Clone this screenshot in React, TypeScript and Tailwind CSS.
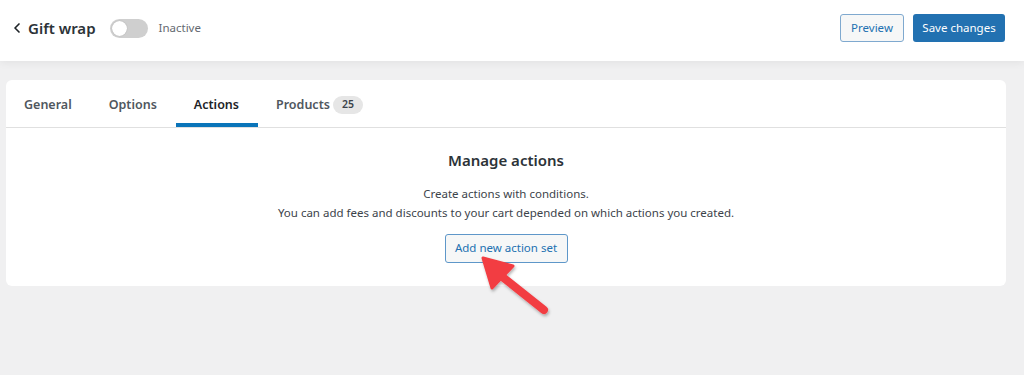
import { ChevronLeft } from "lucide-react";

export default function App() {
  return (
    <div
      className="relative min-h-[375px] w-full overflow-hidden bg-[#f0f0f1] text-[#1d2327]"
      style={{ fontFamily: '"Noto Sans", "Open Sans", sans-serif' }}
    >
      <header className="flex h-[61px] items-start justify-between bg-white pl-[9px] pr-[19px] pt-[14px] shadow-[0_2px_8px_rgba(0,0,0,0.06)]">
        <div className="flex h-[28px] items-center">
          <ChevronLeft className="h-4 w-4 text-[#1d2327]" strokeWidth={2.5} />
          <span className="ml-[3px] text-[15px] font-semibold text-[#2c3338]">Gift wrap</span>
          <span className="ml-[14px] flex h-[19px] w-[38px] items-center rounded-full bg-[#cfcfcf] px-[2px]">
            <span className="h-[15px] w-[15px] rounded-full bg-white shadow-[0_0_1px_rgba(0,0,0,0.3)]" />
          </span>
          <span className="ml-[11px] text-[11.5px] text-[#646970]">Inactive</span>
        </div>
        <div className="flex items-center gap-[9px]">
          <button className="h-[28px] w-[64px] rounded-[3px] border border-[#7fa9cf] bg-[#f6f7f7] text-[11.5px] text-[#2271b1]">
            Preview
          </button>
          <button className="h-[28px] w-[92px] rounded-[3px] bg-[#2271b1] text-[11.5px] text-white">
            Save changes
          </button>
        </div>
      </header>

      <main className="px-[6px] pt-[19px] pr-[18px]">
        <section className="rounded-[6px] bg-white">
          <nav className="flex h-[48px] items-stretch border-b border-[#e0e0e0]">
            {[
              { label: "General", active: false },
              { label: "Options", active: false },
              { label: "Actions", active: true },
            ].map((t) => (
              <div
                key={t.label}
                className={
                  t.active
                    ? "flex items-center border-b-[4px] border-[#0a74b9] pl-[18px] pr-[19px] pt-[7px] text-[12.5px] font-semibold text-[#1d2327]"
                    : "flex items-center border-b-[4px] border-transparent pl-[18px] pr-[19px] pt-[7px] text-[12.5px] font-semibold text-[#50575e]"
                }
              >
                {t.label}
              </div>
            ))}
            <div className="flex items-center border-b-[4px] border-transparent pl-[18px] pr-[19px] pt-[7px] text-[12.5px] font-semibold text-[#50575e]">
              Products
              <span className="ml-[3px] rounded-full bg-[#e6e6e6] px-[9px] py-[1px] text-[10.5px] font-semibold text-[#3c434a]">
                25
              </span>
            </div>
          </nav>
          <div className="flex flex-col items-center pb-[23px] pt-[21px]">
            <h2 className="text-[15px] font-semibold text-[#2c3338]">Manage actions</h2>
            <p className="mt-[12px] text-center text-[11.5px] leading-[19px] text-[#3c434a]">
              Create actions with conditions.
              <br />
              You can add fees and discounts to your cart depended on which actions you created.
            </p>
            <button className="mt-[12px] h-[29px] w-[123px] rounded-[3px] border border-[#5e97c9] bg-[#f6f7f7] text-[11.5px] text-[#2271b1]">
              Add new action set
            </button>
          </div>
        </section>
      </main>

      <svg
        className="pointer-events-none absolute left-[470px] top-[248px]"
        width="90"
        height="80"
        viewBox="0 0 90 80"
      >
        <defs>
          <filter id="sh" x="-20%" y="-20%" width="140%" height="140%">
            <feDropShadow dx="1" dy="2" stdDeviation="1.5" floodColor="#000" floodOpacity="0.3" />
          </filter>
        </defs>
        <g filter="url(#sh)">
          <line x1="30" y1="27" x2="74" y2="62" stroke="#f23d43" strokeWidth="8" strokeLinecap="round" />
          <polygon points="13,10 43,18 22,40" fill="#f23d43" stroke="#f23d43" strokeWidth="3" strokeLinejoin="round" />
        </g>
      </svg>
    </div>
  );
}
